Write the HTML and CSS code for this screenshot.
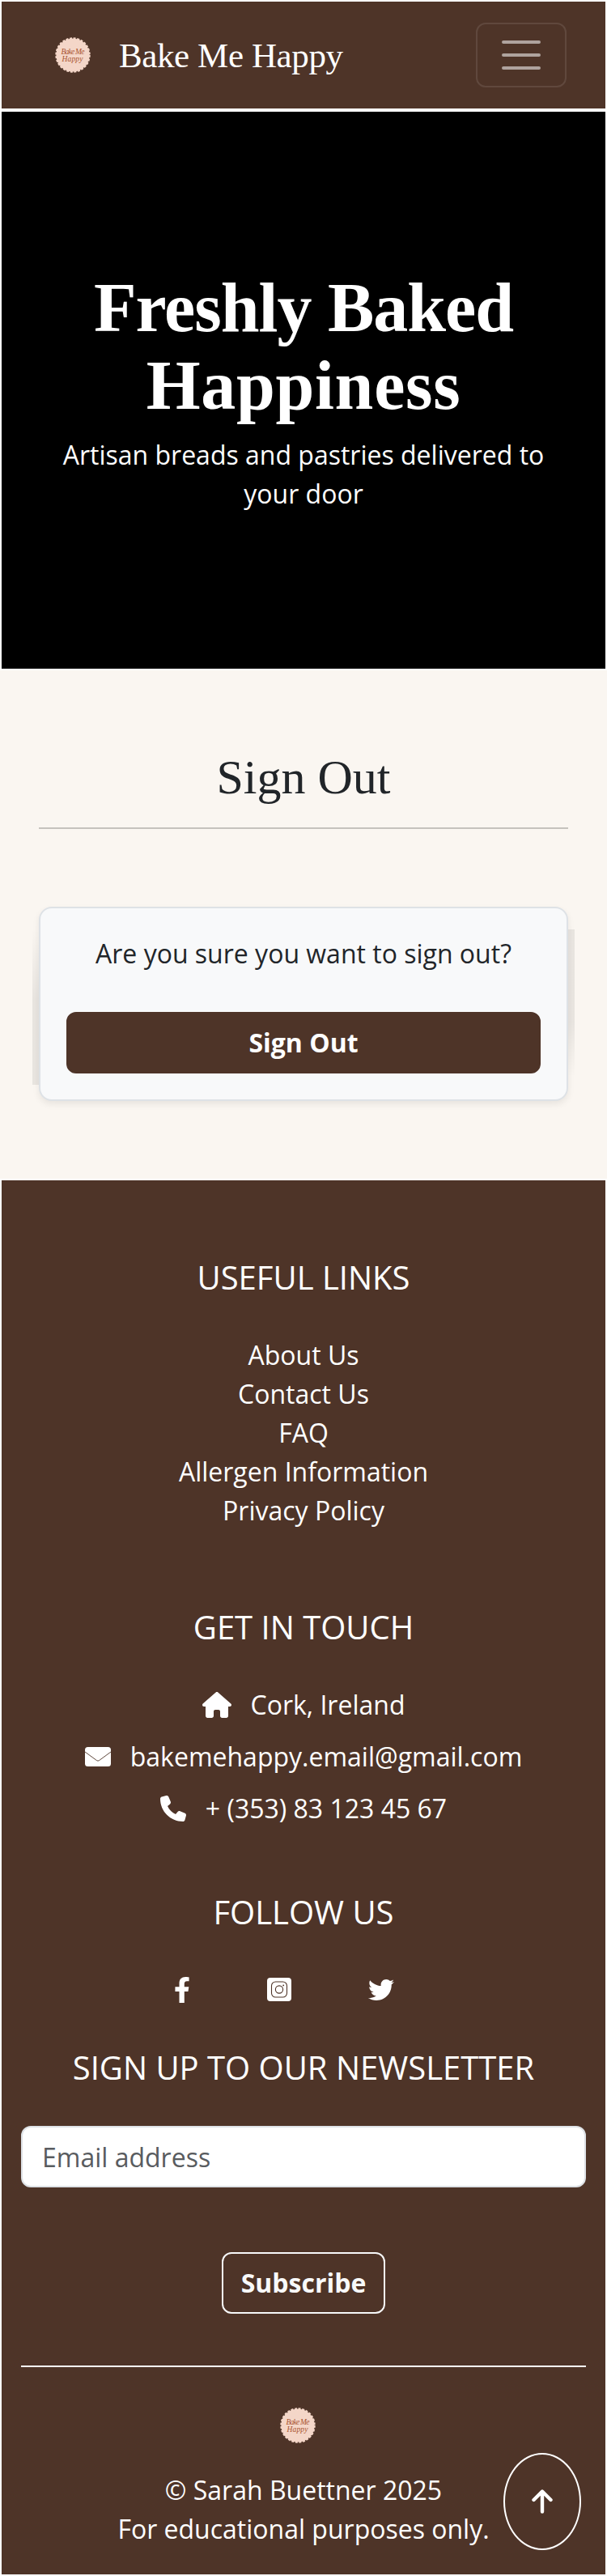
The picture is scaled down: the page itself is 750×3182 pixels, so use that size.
FILE: index.html
```html
<!DOCTYPE html>
<html lang="en">
<head>
<meta charset="utf-8">
<title>Bake Me Happy</title>
<link rel="stylesheet" href="styles.css">
</head>
<body>
<header class="navbar">
  <a class="brand">
    <svg class="logo" viewBox="0 0 44 44">
      <circle class="logo-disc" cx="22" cy="22" r="20.6"/>
      <circle class="logo-edge" cx="22" cy="22" r="20.6"/>
      <text class="logo-text" x="22" y="21" textLength="29">Bake Me</text>
      <text class="logo-text" x="21.5" y="29.5" textLength="26">Happy</text>
    </svg>
    <span class="brand-name">Bake Me Happy</span>
  </a>
  <button class="toggler" aria-label="Toggle navigation">
    <svg viewBox="0 0 30 30" width="60" height="60"><path d="M4 7h22M4 15h22M4 23h22" stroke="#fff" stroke-opacity=".55" stroke-width="2" stroke-linecap="round"/></svg>
  </button>
</header>
<section class="hero">
  <h1 class="hero-title"><span class="line-one">Freshly Baked</span><br><span class="line-two">Happiness</span></h1>
  <p class="hero-text">Artisan breads and pastries delivered to<br>your door</p>
</section>
<main class="main">
  <h2 class="title">Sign Out</h2>
  <div class="card-wrap">
    <div class="card">
      <p class="question">Are you sure you want to sign out?</p>
      <button class="btn-signout">Sign Out</button>
    </div>
  </div>
</main>
<footer class="footer">
  <h5 class="heading">USEFUL LINKS</h5>
  <ul class="links">
    <li>About Us</li><li>Contact Us</li><li>FAQ</li><li>Allergen Information</li><li>Privacy Policy</li>
  </ul>
  <h5 class="heading">GET IN TOUCH</h5>
  <ul class="contact">
    <li><svg width="36" height="32" viewBox="0 0 576 512"><path fill="#fff" d="M575.8 255.5c0 18-15 32.1-32 32.1h-32l.7 160.2V472c0 22.1-17.9 40-40 40H392c-22.1 0-40-17.9-40-40V384c0-17.7-14.3-32-32-32H256c-17.7 0-32 14.3-32 32v88c0 22.1-17.9 40-40 40H104c-22.1 0-40-17.9-40-40V287.6H32c-18 0-32-14-32-32.1c0-9 3-17 10-24L266.4 8c7-7 15-8 22-8s15 2 21 7L564.8 231.5c8 7 12 15 11 24z"/></svg><span>Cork, Ireland</span></li>
    <li><svg width="32" height="32" viewBox="0 0 32 32"><rect y="4" width="32" height="24" rx="3.5" fill="#fff"/><path d="M0 10L14.500 20.600Q16 21.700 17.500 20.600L32 10" fill="none" stroke="#4e3428" stroke-width=".9"/></svg><span>bakemehappy.email@gmail.com</span></li>
    <li><svg width="32" height="32" viewBox="0 0 512 512"><path fill="#fff" d="M164.9 24.6c-7.7-18.6-28-28.5-47.4-23.2l-88 24C12.1 30.2 0 46 0 64C0 311.4 200.6 512 448 512c18 0 33.8-12.1 38.6-29.5l24-88c5.3-19.4-4.6-39.7-23.2-47.4l-96-40c-16.3-6.8-35.2-2.1-46.3 11.6L304.7 368C234.3 334.7 177.3 277.7 144 207.3L193.3 167c13.7-11.2 18.4-30 11.6-46.3l-40-96z"/></svg><span>+ (353) 83 123 45 67</span></li>
  </ul>
  <h5 class="heading">FOLLOW US</h5>
  <div class="social">
    <svg width="20" height="32" viewBox="0 0 320 512"><path fill="#fff" d="M279.14 288l14.22-92.66h-88.91v-60.13c0-25.35 12.42-50.06 52.24-50.06h40.42V6.26S260.43 0 225.36 0c-73.22 0-121.08 44.38-121.08 124.72v70.62H22.89V288h81.39v224h100.17V288z"/></svg>
    <svg width="30" height="30" viewBox="0 0 30 30"><rect width="30" height="29" rx="4" fill="#fff"/><g fill="none" stroke="#4e3428" stroke-width="1.1"><rect x="5.5" y="5" width="19" height="19" rx="5"/><circle cx="15" cy="14.5" r="4.6"/></g><circle cx="20.2" cy="9.4" r=".9" fill="#4e3428"/></svg>
    <svg width="32" height="32" viewBox="0 0 512 512"><path fill="#fff" d="M459.37 151.716c.325 4.548.325 9.097.325 13.645 0 138.72-105.583 298.558-298.558 298.558-59.452 0-114.68-17.219-161.137-47.106 8.447.974 16.568 1.299 25.34 1.299 49.055 0 94.213-16.568 130.274-44.832-46.132-.975-84.792-31.188-98.112-72.772 6.498.974 12.995 1.624 19.818 1.624 9.421 0 18.843-1.3 27.614-3.573-48.081-9.747-84.143-51.98-84.143-102.985v-1.299c13.969 7.797 30.214 12.67 47.431 13.319-28.264-18.843-46.781-51.005-46.781-87.391 0-19.492 5.197-37.36 14.294-52.954 51.655 63.675 129.3 105.258 216.365 109.807-1.624-7.797-2.599-15.918-2.599-24.04 0-57.828 46.782-104.934 104.934-104.934 30.213 0 57.502 12.67 76.67 33.137 23.715-4.548 46.456-13.32 66.599-25.34-7.798 24.366-24.366 44.833-46.132 57.827 21.117-2.273 41.584-8.122 60.426-16.243-14.292 20.791-32.161 39.308-52.628 54.253z"/></svg>
  </div>
  <h5 class="heading">SIGN UP TO OUR NEWSLETTER</h5>
  <input class="email" type="email" placeholder="Email address">
  <button class="btn-subscribe">Subscribe</button>
  <hr class="rule">
  <svg class="logo footer-logo" viewBox="0 0 44 44">
    <circle class="logo-disc" cx="22" cy="22" r="20.6"/>
    <circle class="logo-edge" cx="22" cy="22" r="20.6"/>
    <text class="logo-text" x="22" y="21" textLength="29">Bake Me</text>
    <text class="logo-text" x="21.5" y="29.5" textLength="26">Happy</text>
  </svg>
  <p class="copyright">© Sarah Buettner 2025<br>For educational purposes only.</p>
  <button class="to-top" aria-label="Back to top"><svg width="26" height="30" viewBox="0 0 26 30"><path d="M13 27.5V3M2.5 13L13 2.5L23.500 13" fill="none" stroke="#fff" stroke-width="4.4" stroke-linecap="round" stroke-linejoin="round"/></svg></button>
</footer>
</body>
</html>
```
FILE: styles.css
```css
* { box-sizing: border-box; }
body { margin: 0; background: #faf6f1; color: #212529; font: 32px/48px "Open Sans", "Noto Sans", sans-serif; }
h1, h2, h5, p, ul { margin: 0; padding: 0; font-weight: 400; }
ul { list-style: none; }
button { font: inherit; margin: 0; padding: 0; cursor: pointer; }
svg { display: block; flex: none; }
.logo { width: 44px; height: 44px; }
.logo-disc { fill: #f4d6c8; }
.logo-edge { fill: none; stroke: #f4d6c8; stroke-width: 2.2; stroke-dasharray: 3 1.623; }
.logo-text { fill: #a9532f; font: italic 9.5px "Liberation Serif", serif; text-anchor: middle; }

.navbar { display: flex; align-items: center; justify-content: space-between; height: 136px; padding: 0 48px 0 66px; background: #4e3428; border: 2px solid #fff; }
.brand { display: flex; align-items: center; gap: 35px; }
.brand-name { padding-top: 2px; color: #fff; font: 43px/60px "Liberation Serif", serif; letter-spacing: -.4px; white-space: nowrap; }
.toggler { display: flex; align-items: center; justify-content: center; width: 112px; height: 80px; background: none; border: 2px solid rgba(255,255,255,.1); border-radius: 12px; }

.hero { height: 692px; padding-top: 194px; background: #000; color: #fff; border: 2px solid #fff; text-align: center; }
.hero-title { font: bold 86px/96px "Liberation Serif", serif; }
.line-one { letter-spacing: -1px; }
.line-two { letter-spacing: .7px; }
.hero-text { margin-top: 14px; }

.main { height: 628px; padding: 96px 48px 0; }
.title { height: 100px; border-bottom: 2px solid #c5c2bd; font: 60px/72px "Liberation Serif", serif; text-align: center; }
.card-wrap { position: relative; margin-top: 96px; }
.card-wrap::before, .card-wrap::after { content: ""; position: absolute; width: 8px; }
.card-wrap::before { left: -8px; top: 28px; height: 192px; background: linear-gradient(rgba(0,0,0,0), rgba(0,0,0,.07) 45%); }
.card-wrap::after { right: -8px; top: 28px; height: 192px; background: linear-gradient(rgba(0,0,0,.07) 60%, rgba(0,0,0,0) 95%); }
.card { height: 240px; padding: 32px; background: #f8f9fa; border: 2px solid #dee2e6; border-radius: 16px; box-shadow: 0 4px 8px rgba(0,0,0,.075); text-align: center; }
.btn-signout { display: block; width: 100%; height: 76px; margin-top: 48px; color: #fff; background: #4e3428; border: 2px solid #4e3428; border-radius: 12px; font-weight: 700; }

.footer { position: relative; display: flex; flex-direction: column; align-items: center; height: 1726px; padding: 96px 24px 0; background: #4e3428; border: 2px solid #fff; color: #fff; text-align: center; }
.heading { font-size: 40px; line-height: 48px; }
.links { margin: 48px 0 96px; }
.contact { display: flex; flex-direction: column; align-items: center; gap: 16px; margin: 48px 0 80px; }
.contact li { display: flex; align-items: center; gap: 24px; }
.social { display: flex; align-items: center; gap: 95px; height: 48px; margin: 48px 48px 48px 0; }
.email { width: 100%; height: 76px; margin-top: 48px; padding: 0 24px; font: inherit; background: #fff; border: 2px solid #dee2e6; border-radius: 12px; }
.email::placeholder { color: #595c5f; opacity: 1; }
.btn-subscribe { width: 202px; height: 76px; margin-top: 80px; color: #f8f9fa; background: none; border: 2px solid #f8f9fa; border-radius: 12px; font-weight: 700; }
.rule { width: 100%; height: 2px; margin: 64px 0 50px; border: 0; background: #fff; }
.footer-logo { margin-right: 15px; }
.copyright { margin-top: 34px; }
.to-top { position: absolute; right: 30px; bottom: 30px; display: flex; align-items: center; justify-content: center; width: 96px; height: 120px; background: #4e3428; border: 2px solid #fff; border-radius: 50%; }
```
